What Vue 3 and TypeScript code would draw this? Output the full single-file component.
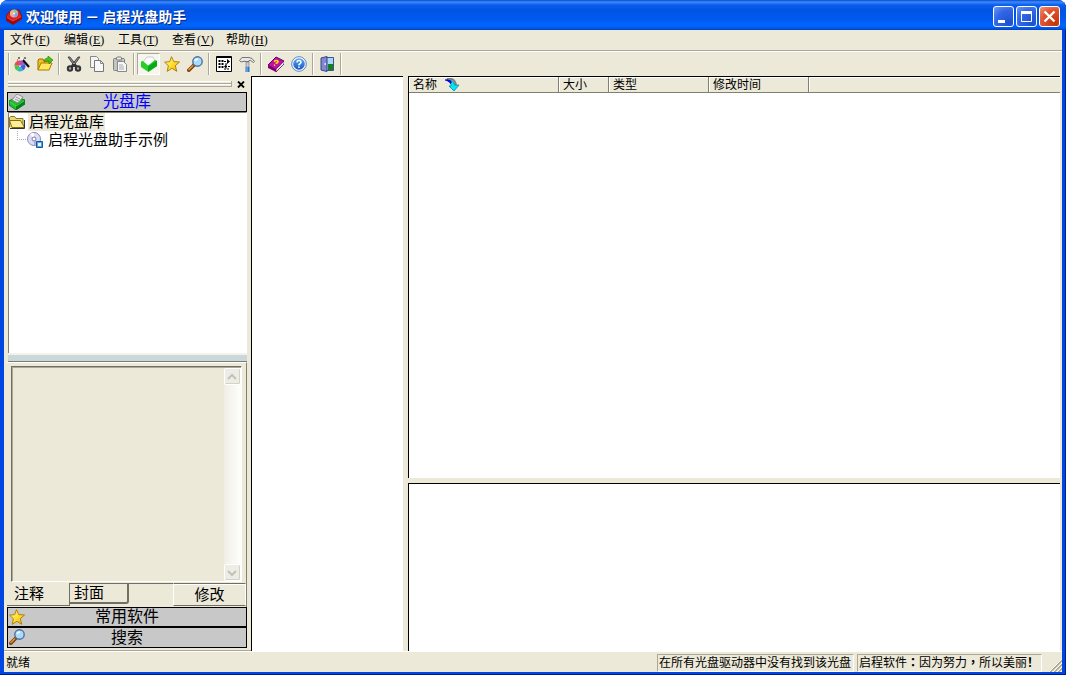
<script setup lang="ts">
import { ref } from 'vue'

interface Tool { icon: string; label: string; pressed?: boolean }

const menus = [
  { label: '文件', key: 'F' },
  { label: '编辑', key: 'E' },
  { label: '工具', key: 'T' },
  { label: '查看', key: 'V' },
  { label: '帮助', key: 'H' },
]

const toolGroups: Tool[][] = [
  [{ icon: 'wizard', label: '向导' }, { icon: 'open', label: '打开' }],
  [{ icon: 'cut', label: '剪切' }, { icon: 'copy', label: '复制' }, { icon: 'paste', label: '粘贴' }],
  [{ icon: 'library', label: '光盘库', pressed: true }, { icon: 'star', label: '常用软件' }, { icon: 'search', label: '搜索' }],
  [{ icon: 'options', label: '选项' }, { icon: 'hammer', label: '工具' }],
  [{ icon: 'book', label: '手册' }, { icon: 'help', label: '帮助' }],
  [{ icon: 'exit', label: '退出' }],
]

const columns = [
  { title: '名称', cls: 'c-name' },
  { title: '大小', cls: 'c-size' },
  { title: '类型', cls: 'c-type' },
  { title: '修改时间', cls: 'c-date' },
  { title: '', cls: 'c-rest' },
]

const note = ref('')
</script>

<template>
  <div class="window">
    <svg class="defs" aria-hidden="true">
      <defs>
        <linearGradient id="gStar" x1="0" y1="0" x2="1" y2="1">
          <stop offset="0" stop-color="#fffbb0" /><stop offset=".5" stop-color="#ffe030" /><stop offset="1" stop-color="#f0a800" />
        </linearGradient>
        <linearGradient id="gHelp" x1="0" y1="0" x2="0" y2="1">
          <stop offset="0" stop-color="#5aa8f4" /><stop offset="1" stop-color="#1258c4" />
        </linearGradient>
        <symbol id="i-wizard" viewBox="0 0 16 16">
          <circle cx="6" cy="10" r="5.500" fill="#e8e8f0" />
          <path d="M6 10V4.500a5.500 5.500 0 0 1 5 3.500z" fill="#b050d0" />
          <path d="M6 10L11 8A5.500 5.500 0 0 1 9 14.500z" fill="#4060e0" />
          <path d="M6 10L9 14.500A5.500 5.500 0 0 1 3 14.500z" fill="#30b8c0" />
          <path d="M6 10L3 14.500A5.500 5.500 0 0 1 .5 9z" fill="#48c840" />
          <path d="M6 10L.5 9A5.500 5.500 0 0 1 6 4.500z" fill="#e84858" />
          <circle cx="6" cy="10" r=".8" fill="#fff" />
          <path d="M8 3L15 11" stroke="#111" stroke-width="2.200" />
          <path d="M7 2L9 4" stroke="#fff" stroke-width="2" />
          <path d="M5 1v2M4 2h2M11 1v2M10 2h2M3 4h1" stroke="#555" />
        </symbol>
        <symbol id="i-open" viewBox="0 0 16 16">
          <path d="M1 14V4l1-1h4l1 2h6v3" fill="#f4c020" stroke="#987000" />
          <path d="M1 14L4 7h11l-3 7z" fill="#ffe860" stroke="#a87c00" />
          <path d="M7 6C7 3 9 2 11 2V0l5 4-4 4V5c-2 0-3 0-5 1z" fill="#48c020" stroke="#207808" stroke-width=".6" />
        </symbol>
        <symbol id="i-cut" viewBox="0 0 16 16">
          <path d="M2 1h2l7 9-2 1zM14 1h-2L5 10l2 1z" fill="#888" stroke="#333" stroke-width=".8" />
          <circle cx="4" cy="12.500" r="2.200" fill="#aaa" stroke="#333" stroke-width="2" />
          <circle cx="12" cy="12.500" r="2.200" fill="#aaa" stroke="#333" stroke-width="2" />
          <path d="M6 9.500h4" stroke="#333" stroke-width="3" />
        </symbol>
        <symbol id="i-copy" viewBox="0 0 16 16">
          <path d="M1.500 .5h6l2 2v9h-8z" fill="#f4f4f4" stroke="#888" />
          <path d="M5.500 4.500h6l3 3v8h-9z" fill="#f8f8f8" stroke="#777" />
          <path d="M11.500 4.500v3h3" fill="none" stroke="#888" />
        </symbol>
        <symbol id="i-paste" viewBox="0 0 16 16">
          <rect x="1.500" y="2.500" width="11" height="12" rx="1" fill="#c4c4c0" stroke="#808080" />
          <rect x="4.500" y="1" width="5" height="3" rx="1" fill="#eee" stroke="#777" />
          <path d="M5.500 5.500h6l3 3v7h-9z" fill="#f6f6f6" stroke="#888" />
          <path d="M7 9h4M7 11h5M7 13h5" stroke="#aaa" />
        </symbol>
        <symbol id="i-library" viewBox="0 0 16 16">
          <path d="M2 6l4-5h6l2 4-7 6z" fill="#fff" stroke="#b8b8b8" stroke-width=".7" />
          <path d="M0 5.500l2-.5 5 4.500L14 4l2 1v5l-8.500 6L0 11z" fill="#28d028" />
          <path d="M7 10.500v5.200l9-5.700V4.500z" fill="#08a818" />
        </symbol>
        <symbol id="i-box" viewBox="0 0 16 16">
          <path d="M0 7l8-4 8 3v4l-9 6-7-5z" fill="#20c030" stroke="#066810" stroke-width=".8" />
          <path d="M7 11v5l9-6V6z" fill="#078018" />
          <path d="M3 6l5-6 6 3-5 6z" fill="#e8e8ec" stroke="#777" stroke-width=".7" />
          <path d="M7 3l4 2M6 5l4 2" stroke="#999" />
          <path d="M1 8l6 4 8-5" fill="none" stroke="#40d850" />
        </symbol>
        <symbol id="i-star" viewBox="0 0 16 16">
          <path d="M7.500 0.700L9.800 5.600 15.500 6 11.300 9.700 12.800 15.300 8 12.300 3.200 15.300 4.400 9.700.6 6.200 5.700 5.600z" fill="url(#gStar)" stroke="#a87800" stroke-width=".9" stroke-linejoin="round" />
        </symbol>
        <symbol id="i-search" viewBox="0 0 16 16">
          <path d="M1.800 14.200L7 9" stroke="#7c4410" stroke-width="3.600" stroke-linecap="round" />
          <path d="M1.500 14L6 9.500" stroke="#e89838" stroke-width="1.500" />
          <circle cx="10.500" cy="5.500" r="4.700" fill="#a8dcfc" stroke="#5070a0" stroke-width="1.400" />
          <path d="M8 5a3 3 0 0 1 3-2" stroke="#fff" stroke-width="1.500" fill="none" />
        </symbol>
        <symbol id="i-options" viewBox="0 0 16 16">
          <path d="M.5 .5h15v15H.5z" fill="#fff" stroke="#000" />
          <path d="M1 1.500h14" stroke="#000" />
          <path d="M3.500 4v9M6.500 4v9" stroke="#000" stroke-width="2" stroke-dasharray="2 1" />
          <path d="M8 5.500h4M9 10.500h5M9 8h2M8 13h5" stroke="#000" stroke-dasharray="2 1" />
          <path d="M11 3l3 2.500L11 8zM10.500 8v5L8 10.500z" fill="#000" />
        </symbol>
        <symbol id="i-hammer" viewBox="0 0 16 16">
          <path d="M.5 4.500L3 1.500h7l3 1 2.500 3-1 1-3-2H10v1H6V5L2 6z" fill="#e8e8e8" stroke="#666" stroke-width=".9" />
          <path d="M7 6h3v5H7z" fill="#ccc" stroke="#777" stroke-width=".6" />
          <path d="M6.500 11h4v5h-4z" fill="#2878d0" /><path d="M8 11v5" stroke="#88c4f8" />
        </symbol>
        <symbol id="i-book" viewBox="0 0 16 16">
          <path d="M0 9L8 1l8 4-8 9z" fill="#c010a8" stroke="#600060" />
          <path d="M0 9v3l8 4v-3z" fill="#800070" />
          <path d="M8 13v3l8-8V5z" fill="#fff" stroke="#600060" stroke-width=".8" />
          <path d="M9 13.500l6-7" stroke="#999" stroke-width=".6" />
          <path d="M6 5.500q3-2 4 0 0 1.500-2.500 2M6 9.500l1-.5" stroke="#ffe000" stroke-width="1.600" fill="none" />
        </symbol>
        <symbol id="i-help" viewBox="0 0 16 16">
          <circle cx="8" cy="8" r="7.300" fill="#fff" stroke="#4878b8" stroke-width=".9" />
          <circle cx="8" cy="8" r="5.800" fill="url(#gHelp)" />
          <path d="M6 6.500Q6 4.500 8 4.500T10 6.300Q10 7.300 8 8.500V9.500M8 10.500V12" stroke="#fff" stroke-width="1.500" fill="none" />
        </symbol>
        <symbol id="i-exit" viewBox="0 0 16 16">
          <path d="M5.500 1.500h8v13h-8z" fill="#b8c8f0" stroke="#405090" />
          <path d="M8 8h5v6H8z" fill="#108020" /><path d="M8 2h5v6H8z" fill="#a8d8f8" />
          <path d="M1 2l6-1.500v15L1 14z" fill="#8088d0" stroke="#38408c" />
          <path d="M4.500 8h1.500" stroke="#fff" stroke-width="1.500" />
        </symbol>
        <symbol id="i-app" viewBox="0 0 16 16">
          <path d="M0 7l5-6 8 0 3 7-9 7-6-3z" fill="#d82020" stroke="#700" stroke-width=".7" />
          <path d="M0 8l7 4 9-5v3l-9 6-7-5z" fill="#a00808" />
          <circle cx="8" cy="4.500" r="4" fill="#e8a0c8" />
          <path d="M8 4.500V.5a4 4 0 0 1 3.500 2.500z" fill="#70d878" />
          <path d="M8 4.500L12 4a4 4 0 0 1-3 4z" fill="#68a8f0" />
          <path d="M8 4.500L4.500 6.500A4 4 0 0 1 5 2z" fill="#e8c050" />
          <circle cx="8" cy="4.500" r="1" fill="#fff" />
          <path d="M1 8.500l6 3.500 8-4.500" stroke="#e84838" fill="none" />
        </symbol>
        <symbol id="i-folder" viewBox="0 0 16 16">
          <path d="M.5 13.500v-10l1-1h4l1.500 2h7v9" fill="#e8d878" stroke="#887820" />
          <path d="M3 13.500L.5 6.500h11l4 7z" fill="#fff098" stroke="#807010" />
          <path d="M1 14.500h14.500V6" stroke="#333" fill="none" />
        </symbol>
        <symbol id="i-disc" viewBox="0 0 16 16">
          <circle cx="7" cy="7" r="6.500" fill="#dcdcf4" stroke="#8888b8" />
          <path d="M7 7L3 2a6 6 0 0 1 4-1z" fill="#fff" /><path d="M7 7l5 4a6 6 0 0 1-5 2z" fill="#b8a8f0" />
          <circle cx="7" cy="7" r="2" fill="#fff" stroke="#7878a8" />
          <path d="M9.500 9.500h6v6h-6z" fill="#50a8e0" stroke="#185890" /><path d="M11 11h3v3h-3z" fill="#e8f8ff" />
        </symbol>
        <symbol id="i-sort" viewBox="0 0 16 14">
          <path d="M3 1C8 0 11 2 12 7" fill="none" stroke="#808080" stroke-width="2" />
          <path d="M5 2c3 0 5 2 5.500 5H15l-5 6-5-5h2C7 5 6 4 4 3z" fill="#00e8f8" stroke="#0078a0" stroke-width=".7" />
          <path d="M1 1.500q5-1 7 2.500L6.500 6Q5 3 1 2.500z" fill="#0000e0" />
        </symbol>
      </defs>
    </svg>

    <header class="titlebar">
      <svg class="icon"><use href="#i-app" /></svg>
      <h1>欢迎使用 － 启程光盘助手</h1>
      <div class="controls">
        <button aria-label="最小化"><svg viewBox="0 0 19 19"><path d="M4 13h7v3H4z" fill="#fff" /></svg></button>
        <button aria-label="最大化"><svg viewBox="0 0 19 19"><path d="M4.500 5v9.500h10V5" fill="none" stroke="#fff" /><path d="M4 4h11v3H4z" fill="#fff" /></svg></button>
        <button class="close" aria-label="关闭"><svg viewBox="0 0 19 19"><path d="M4.500 4.500l10 10M14.500 4.500l-10 10" stroke="#fff" stroke-width="2.400" /></svg></button>
      </div>
    </header>

    <div class="client">
      <nav class="menubar">
        <button v-for="m in menus" :key="m.key">{{ m.label }}<span class="mnemonic">(<u>{{ m.key }}</u>)</span></button>
      </nav>

      <div class="toolbar" role="toolbar">
        <div v-for="(group, i) in toolGroups" :key="i" class="group">
          <button v-for="t in group" :key="t.icon" :class="{ pressed: t.pressed }" :aria-label="t.label">
            <svg class="icon"><use :href="'#i-' + t.icon" /></svg>
          </button>
        </div>
      </div>

      <main class="body">
        <aside class="sidebar">
          <div class="grip">
            <span class="bars"></span>
            <button aria-label="关闭面板"><svg viewBox="0 0 8 7"><path d="M1 .5l6 6M7 .5l-6 6" stroke="#000" stroke-width="1.800" /></svg></button>
          </div>
          <button class="section active"><svg class="icon"><use href="#i-box" /></svg>光盘库</button>
          <ul class="tree">
            <li>
              <div class="node selected"><svg class="icon"><use href="#i-folder" /></svg><span>启程光盘库</span></div>
              <ul>
                <li class="node"><svg class="icon"><use href="#i-disc" /></svg><span>启程光盘助手示例</span></li>
              </ul>
            </li>
          </ul>
          <div class="splitter"></div>
          <section class="notes">
            <div class="notebox">
              <textarea v-model="note" aria-label="注释" readonly></textarea>
              <div class="scroll">
                <button aria-label="向上"><svg viewBox="0 0 14 14"><path d="M3 9l4-4 4 4" /></svg></button>
                <button aria-label="向下"><svg viewBox="0 0 14 14"><path d="M3 5l4 4 4-4" /></svg></button>
              </div>
            </div>
            <div class="tabs">
              <button class="tab current">注释</button>
              <button class="tab">封面</button>
              <button class="edit">修改</button>
            </div>
          </section>
          <button class="section"><svg class="icon"><use href="#i-star" /></svg>常用软件</button>
          <button class="section joined"><svg class="icon"><use href="#i-search" /></svg>搜索</button>
        </aside>

        <section class="pane middle"></section>

        <div class="right">
          <section class="pane files">
            <table>
              <thead>
                <tr>
                  <th v-for="(c, i) in columns" :key="c.cls" :class="c.cls">
                    <div>{{ c.title }}<svg v-if="i === 0" class="sort"><use href="#i-sort" /></svg></div>
                  </th>
                </tr>
              </thead>
            </table>
          </section>
          <section class="pane preview"></section>
        </div>
      </main>

      <footer class="status">
        <span class="ready">就绪</span>
        <span class="cell find">在所有光盘驱动器中没有找到该光盘</span>
        <span class="cell slogan">启程软件<span class="punct">：</span>因为努力<span class="punct">，</span>所以美丽<b>！</b></span>
        <svg class="sizer" viewBox="0 0 14 14"><path d="M2 14L14 2M6 14l8-8M10 14l4-4" stroke="#a8a490" stroke-width="2" /><path d="M1 14L14 1M5 14l9-9M9 14l5-5" stroke="#fff" /></svg>
      </footer>
    </div>
  </div>
</template>

<style>
html, body, #app { height: 100%; }
body { margin: 0; overflow: hidden; background: #fff; }
</style>

<style scoped>
*, *::before, *::after { box-sizing: border-box; }
.window {
  height: 100vh;
  display: flex;
  flex-direction: column;
  border-radius: 8px 8px 0 0;
  overflow: hidden;
  background: #0046e0;
  box-shadow: inset -1px -1px #001c90;
  font: 12px/16px "Liberation Sans", "Noto Sans CJK SC", sans-serif;
  color: #000;
}
.defs { position: absolute; width: 0; height: 0; }
button { font: inherit; color: inherit; margin: 0; padding: 0; border: 0; background: none; }
.icon { width: 16px; height: 16px; flex: none; display: block; }

.titlebar {
  height: 30px;
  flex: none;
  display: flex;
  align-items: center;
  padding: 3px 6px 0;
  background: linear-gradient(#0a48c8 0, #3c8cff 2px, #0a5eea 5px, #0054e3 10px, #0058ee 18px, #0066ff 26px, #0052d8 29px, #003cb8 30px);
}
h1 { flex: 1; margin: 0 0 2px 4px; font-size: 14px; line-height: 18px; font-weight: bold; font-family: "Noto Sans CJK SC", sans-serif; color: #fff; text-shadow: 1px 1px #0a2a80; white-space: nowrap; }
.controls { display: flex; gap: 2px; }
.controls button {
  width: 21px;
  height: 21px;
  border: 1px solid #fff;
  border-radius: 3px;
  background: radial-gradient(circle at 80% 85%, #1c50d0, #3268e8 60%, #6c98f8);
}
.controls .close { background: radial-gradient(circle at 80% 85%, #c83408, #e05430 60%, #f09878); }
.controls svg { display: block; width: 19px; height: 19px; }

.client {
  flex: 1;
  min-height: 0;
  display: flex;
  flex-direction: column;
  margin: 0 4px 3px;
  background: #ece9d8;
}
.menubar { height: 21px; flex: none; display: flex; padding-left: 6px; border-bottom: 1px solid #aca899; }
.menubar button { width: 54px; height: 20px; text-align: left; white-space: nowrap; }
.mnemonic { font-family: "Liberation Serif", serif; padding-left: 1px; }

.toolbar { height: 25px; flex: none; display: flex; align-items: center; padding-left: 4px; border-top: 1px solid #fff; }
.toolbar::before { content: ""; width: 2px; height: 22px; border-left: 1px solid #aca899; border-right: 1px solid #fff; }
.group { display: flex; align-items: center; }
.group::after { content: ""; width: 2px; height: 22px; margin: 0 2px; border-left: 1px solid #aca899; border-right: 1px solid #fff; }
.group:last-child::after { margin-left: 1px; }
.group button { width: 23px; height: 22px; display: grid; place-items: center; }
.group + .group { padding-left: 0; }
.group .pressed { border: 1px solid; border-color: #aca899 #fff #fff #aca899; background: #f6f5ee; }

.body { flex: 1; min-height: 0; display: flex; padding-right: 2px; }
.sidebar { width: 247px; flex: none; display: flex; flex-direction: column; padding: 0 4px 2px 3px; border-bottom: 1px solid #aca899; }
.grip { height: 16px; flex: none; display: flex; align-items: center; gap: 5px; padding-left: 1px; }
.bars { width: 224px; height: 6px; border-right: 1px solid #aca899; background: linear-gradient(#fff 1px, #ece9d8 1px, #ece9d8 2px, #aca899 2px, #aca899 3px, #fff 3px, #fff 4px, #ece9d8 4px, #ece9d8 5px, #aca899 5px); }
.grip button { width: 8px; height: 8px; }
.grip svg { display: block; width: 8px; height: 7px; }
.section {
  position: relative;
  height: 21px;
  flex: none;
  border: 1px solid #000;
  border-bottom-width: 2px;
  background: #c8c8c8;
  font-size: 16px;
  line-height: 18px;
  text-align: center;
}
.section.active { height: 20px; border-bottom-width: 1px; color: #00f; }
.section.joined { height: 20px; border-width: 0 1px 1px; }
.section .icon { position: absolute; left: 1px; top: 1px; }
.tree {
  flex: 1;
  min-height: 0;
  margin: 0 0 0 1px;
  padding: 0;
  border: solid #808070;
  border-width: 1px 1px 0 1px;
  border-right-color: #fff;
  background: #fff;
  font-size: 15px;
  list-style: none;
}
.tree ul { margin: 0; padding: 0; list-style: none; }
.node { height: 18px; display: flex; align-items: center; gap: 3px; line-height: 18px; white-space: nowrap; }
.node span { padding: 0 1px; }
.selected span { background: #ece9d8; }
.tree ul .node { padding-left: 8px; }
.tree ul .node::before { content: ""; width: 9px; height: 9px; margin-right: -2px; align-self: flex-start; border: dotted #aaa; border-width: 0 0 1px 1px; }
.tree ul span { padding-left: 2px; }
.splitter { height: 9px; flex: none; margin-left: 1px; background: #c8d8dc; border: solid; border-width: 2px 0 1px; border-color: #f4f2e8 transparent #807c6c; }

.notes { height: 245px; flex: none; display: flex; flex-direction: column; border-top: 1px solid #fff; border-right: 1px solid #808070; }
.notebox { flex: 1; min-height: 0; display: flex; margin: 3px 4px 0 4px; border: 1px solid #fff; border-top-color: #716f64; border-left-color: #716f64; box-shadow: inset 1px 1px #aca899; padding: 1px 0 0 1px; }
textarea { flex: 1; min-width: 0; margin: 0; border: 0; padding: 2px; resize: none; background: #ece9d8; font: inherit; outline: none; }
.scroll { width: 17px; display: flex; flex-direction: column; justify-content: space-between; background: linear-gradient(90deg, #f0efe6, #fefefb); }
.scroll button { height: 17px; border: 1px solid #fff; border-radius: 2px; background: #eeede5; box-shadow: inset -1px -1px #d4d2c4; }
.scroll svg { width: 14px; height: 14px; display: block; fill: none; stroke: #c4c2b6; stroke-width: 2; }
.tabs { height: 25px; flex: none; display: flex; align-items: flex-start; font-size: 15px; border-top: 1px solid transparent; background: linear-gradient(#716f64, #716f64) 122px 0 / 100% 1px no-repeat; }
.tab { width: 59px; height: 21px; padding-left: 4px; text-align: left; line-height: 18px; border: solid #716f64; border-width: 1px 2px 2px 0; border-radius: 0 0 3px 0; }
.tab.current { width: 63px; height: 23px; padding-left: 7px; line-height: 22px; border-width: 0 1px 1px 0; border-radius: 0; }
.edit { flex: none; width: 73px; height: 23px; margin-left: auto; line-height: 21px; border: 1px solid; border-color: #716f64 #fff #716f64 #fff; box-shadow: inset 0 1px #fff; }

.pane { background: #fff; border: solid #000; border-width: 1px 0 0 1px; }
.middle { width: 152px; flex: none; }
.right { flex: 1; min-width: 0; display: flex; flex-direction: column; margin-left: 5px; }
.files { flex: 1; min-height: 0; }
.preview { height: 168px; flex: none; margin-top: 5px; }
table { width: 100%; table-layout: fixed; border-collapse: separate; border-spacing: 0; }
th { height: 16px; padding: 0 0 0 4px; font-weight: normal; text-align: left; background: #ece9d8; border-right: 1px solid #808070; border-bottom: 1px solid #808070; box-shadow: inset 1px 1px #fff; white-space: nowrap; }
th div { display: flex; align-items: center; height: 15px; }
.sort { width: 16px; height: 14px; margin-left: 7px; }
.c-name { width: 150px; }
.c-size { width: 50px; }
.c-type, .c-date { width: 100px; }
.c-rest { width: auto; border-right: 0; }

.status { height: 21px; flex: none; display: flex; align-items: center; gap: 3px; border-top: 1px solid #fff; padding: 1px 0 0 2px; }
.ready { flex: 1; }
.cell { height: 18px; line-height: 16px; padding-left: 1px; border: 1px solid; border-color: #aca899 #fff #fff #aca899; white-space: nowrap; overflow: hidden; }
.find { width: 197px; }
.slogan { width: 185px; }
.punct { font-family: "Noto Sans CJK TC", sans-serif; font-weight: bold; line-height: 1; }
.sizer { width: 14px; height: 14px; align-self: flex-end; margin-left: 3px; }
</style>
